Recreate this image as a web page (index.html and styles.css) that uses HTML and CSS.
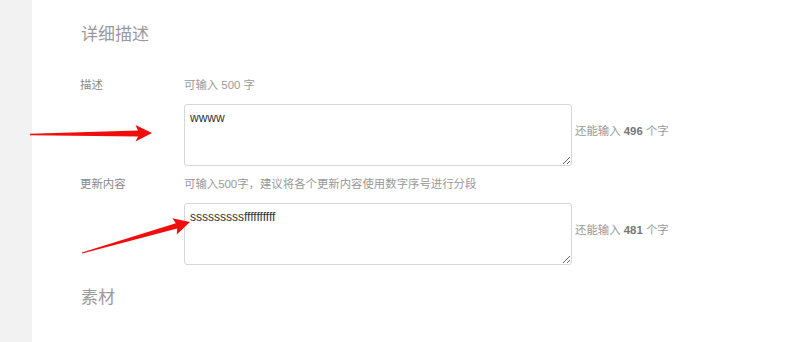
FILE: index.html
```html
<!DOCTYPE html>
<html lang="zh-CN">
<head>
<meta charset="utf-8">
<title>详细描述</title>
<link rel="stylesheet" href="styles.css">
</head>
<body>
<div class="page">
  <aside class="sidebar"></aside>
  <main class="main">
    <h2 class="section-title first">详细描述</h2>
    <div class="form-row">
      <div class="label">描述</div>
      <div class="field">
        <div class="hint">可输入 500 字</div>
        <div class="input-line">
          <textarea class="textarea">wwww</textarea>
          <span class="counter">还能输入 <b>496</b> 个字</span>
        </div>
      </div>
    </div>
    <div class="form-row">
      <div class="label">更新内容</div>
      <div class="field">
        <div class="hint">可输入500字，建议将各个更新内容使用数字序号进行分段</div>
        <div class="input-line">
          <textarea class="textarea">sssssssssffffffffff</textarea>
          <span class="counter">还能输入 <b>481</b> 个字</span>
        </div>
      </div>
    </div>
    <h2 class="section-title second">素材</h2>
  </main>
  <svg class="arrows" width="786" height="342" viewBox="0 0 786 342" xmlns="http://www.w3.org/2000/svg">
    <polygon fill="#f20d0d" points="30,133.8 138,130.6 135.5,125 152,133 135.5,141.5 138,136.4 30,135.2"/>
    <polygon fill="#f20d0d" points="81.9,252.4 175.8,223.3 172.4,218.2 190,222 176.8,234.6 177.2,228.4 82.2,253.6"/>
  </svg>
</div>
</body>
</html>
```

FILE: styles.css
```css
* { box-sizing: border-box; }
html, body { margin: 0; padding: 0; background: #fff; }
body {
  font-family: "Liberation Sans", Arial, "Noto Sans CJK SC", sans-serif;
  color: #999;
}
.page {
  position: relative;
  display: flex;
  width: 786px;
  height: 342px;
  overflow: hidden;
}
.sidebar {
  width: 32px;
  flex: none;
  background: #f2f2f2;
}
.main {
  flex: 1;
  padding-left: 48px;
  background: #fff;
}
.section-title {
  margin: 0;
  font-size: 17px;
  line-height: 24px;
  font-weight: normal;
  color: #9a9a9a;
  padding-left: 1px;
}
.section-title.first { margin-top: 23px; margin-bottom: 29px; }
.section-title.second { margin-top: 21px; }
.form-row {
  display: grid;
  grid-template-columns: 104px auto;
  margin-bottom: 9px;
}
.label, .hint {
  font-size: 11.4px;
  line-height: 18px;
  color: #888;
}
.hint { color: #999; }
.input-line {
  display: flex;
  align-items: center;
  margin-top: 10px;
}
.textarea {
  width: 388px;
  height: 62px;
  margin: 0;
  border: 1px solid #d6d6d6;
  border-radius: 3px;
  padding: 5px 6px 5px 5px;
  font-family: "Liberation Sans", Arial, sans-serif;
  font-size: 12px;
  line-height: 16px;
  color: #333;
  background: #fff;
  resize: both;
  outline: none;
}
.counter {
  margin-left: 3px;
  padding-bottom: 9px;
  font-size: 11.4px;
  line-height: 18px;
  color: #999;
}
.counter b { color: #777; font-weight: bold; }
.arrows {
  position: absolute;
  left: 0;
  top: 0;
  pointer-events: none;
}
```
